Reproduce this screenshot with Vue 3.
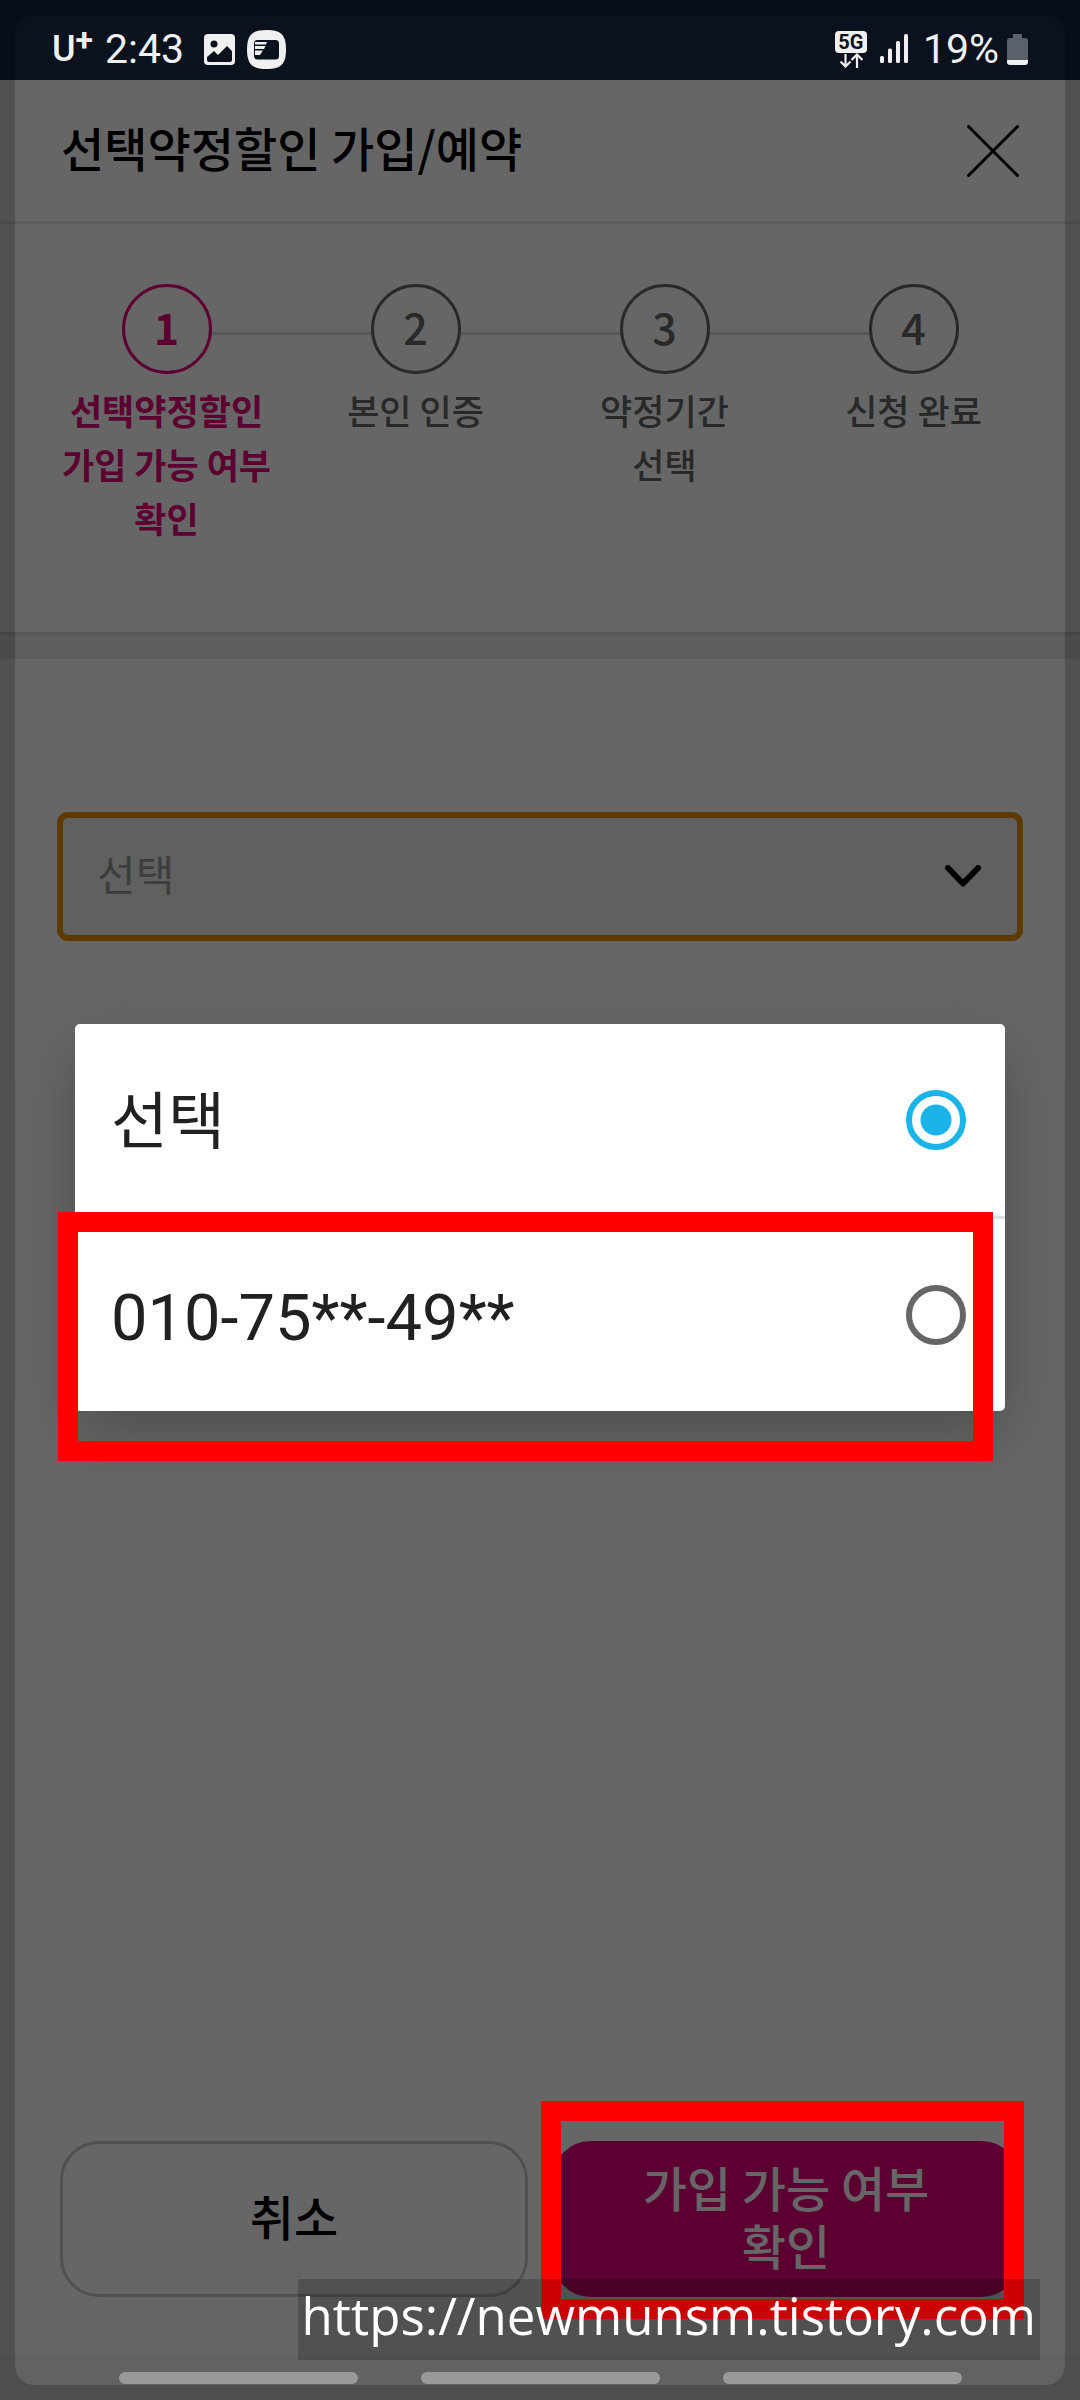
<template>
  <div class="screen">
    <div class="status-bar">
      <div class="status-group">
        <span class="carrier">U<span class="plus">+</span></span>
        <span class="clock">2:43</span>
        <svg class="photo-icon" width="31" height="31" viewBox="0 0 31 31">
          <rect width="31" height="31" rx="4" fill="#f0f0f0" />
          <circle cx="10" cy="10" r="3.5" fill="#0b121d" />
          <path d="M3 23l7-6 4 4 9-9 5 5v9q0 2-2 2H5q-2 0-2-2z" fill="#0b121d" />
        </svg>
        <svg class="app-icon" width="39" height="39" viewBox="0 0 39 39">
          <path d="M19.500 0C34 0 39 5 39 19.500S34 39 19.500 39 0 34 0 19.500 5 0 19.500 0z" fill="#f0f0f0" />
          <rect x="8" y="11" width="23" height="17.500" rx="2.500" fill="#0b121d" stroke="#0b121d" stroke-width="2" />
          <path d="M8 12h12l-1 2.500H8zM8 16h10.500l-1.500 3H8zM8 20.500h8l-3 4.500H8z" fill="#f0f0f0" />
        </svg>
      </div>
      <div class="status-group">
        <div class="network">
          <span class="network-type">5G</span>
          <svg width="24" height="15" viewBox="0 0 24 15" fill="none" stroke="#f0f0f0" stroke-width="2.200">
            <path d="M6.500 1v12M1.500 8.500l5 5 5-5M18 15V2M12.500 7L18 1.500 23.500 7" />
          </svg>
        </div>
        <svg class="signal" width="28" height="30" viewBox="0 0 28 30" fill="#f0f0f0">
          <rect x="0" y="22" width="4" height="7" rx="1.500" />
          <rect x="8" y="14.500" width="4" height="14.500" rx="1.500" />
          <rect x="16" y="7" width="4" height="22" rx="1.500" />
          <rect x="24" y="0" width="4" height="29" rx="1.500" />
        </svg>
        <span class="clock">19%</span>
        <svg class="battery" width="21" height="31" viewBox="0 0 21 31">
          <path d="M6 0h9v4h3q3 0 3 3v19H0V7q0-3 3-3h3z" fill="#5a616b" />
          <path d="M0 26h21v2q0 3-3 3H3q-3 0-3-3z" fill="#f0f0f0" />
        </svg>
      </div>
    </div>

    <main class="page">
      <header class="page-header">
        <h1>선택약정할인 가입/예약</h1>
        <button class="close" type="button" aria-label="닫기">
          <svg width="52" height="52" viewBox="0 0 52 52" fill="none" stroke="#000" stroke-width="3" stroke-linecap="round">
            <path d="M1.500 1.500l49 49M50.500 1.500l-49 49" />
          </svg>
        </button>
      </header>

      <ol class="steps">
        <li v-for="(step, i) in steps" :key="i" class="step" :class="{ active: i === 0 }">
          <div class="step-head">
            <span class="circle">{{ i + 1 }}</span>
          </div>
          <div class="step-label">
            <div v-for="line in step" :key="line">{{ line }}</div>
          </div>
        </li>
      </ol>

      <div class="select-box">
        <select v-model="selected" aria-label="휴대폰 번호">
          <option v-for="opt in options" :key="opt" :value="opt">{{ opt }}</option>
        </select>
        <svg class="chevron" width="36" height="22" viewBox="0 0 36 22" fill="none" stroke="#000" stroke-width="6" stroke-linecap="round" stroke-linejoin="round">
          <path d="M3 3l15 15.500L33 3" />
        </svg>
      </div>

      <footer class="actions">
        <div class="action">
          <button class="btn cancel" type="button">취소</button>
        </div>
        <div class="action">
          <button class="btn confirm" type="button">가입 가능 여부<br />확인</button>
          <div class="marker marker-button"></div>
        </div>
      </footer>
    </main>

    <div class="scrim"></div>

    <div class="dialog-wrap">
      <div class="dialog" role="dialog">
        <label v-for="opt in options" :key="opt" class="option">
          <span>{{ opt }}</span>
          <input v-model="selected" type="radio" name="phone" :value="opt" />
        </label>
        <div class="marker marker-option"></div>
      </div>
    </div>

    <nav class="nav-bar">
      <span v-for="n in 3" :key="n" class="nav-hint"></span>
    </nav>

    <div class="watermark">https://newmunsm.tistory.com</div>
    <div class="bezel"></div>
  </div>
</template>

<script setup>
import { ref } from 'vue'

const steps = [
  ['선택약정할인', '가입 가능 여부', '확인'],
  ['본인 인증'],
  ['약정기간', '선택'],
  ['신청 완료']
]

const options = ['선택', '010-75**-49**']
const selected = ref('선택')
</script>

<style>
body {
  margin: 0;
}
</style>

<style scoped>
.screen {
  position: relative;
  display: flex;
  flex-direction: column;
  min-height: 100vh;
  overflow: hidden;
  background: #fff;
  font-family: "Noto Sans CJK KR", sans-serif;
}

/* status bar */
.status-bar {
  display: flex;
  align-items: center;
  justify-content: space-between;
  height: 80px;
  padding: 18px 52px 0;
  box-sizing: border-box;
  background: #0b121d;
  color: #f0f0f0;
  font-family: Roboto, sans-serif;
}
.status-group {
  display: flex;
  align-items: center;
}
.carrier {
  display: flex;
  align-items: center;
  font-size: 36px;
  font-weight: 500;
  line-height: 40px;
}
.plus {
  padding-bottom: 18px;
  font-size: 32px;
  font-weight: 700;
  line-height: 20px;
}
.clock {
  margin-left: 12px;
  font-size: 41px;
  line-height: 48px;
}
.photo-icon {
  margin-left: 20px;
}
.app-icon {
  margin-left: 12px;
}
.network {
  display: flex;
  flex-direction: column;
  align-items: center;
  width: 32px;
}
.network-type {
  width: 32px;
  border-radius: 4px;
  background: #f0f0f0;
  color: #0b121d;
  font-size: 20px;
  font-weight: 700;
  line-height: 22px;
  text-align: center;
}
.signal {
  margin: 0 3px 0 13px;
}
.battery {
  margin-left: 8px;
}

/* page */
.page {
  display: flex;
  flex: 1;
  flex-direction: column;
}
.page-header {
  display: flex;
  align-items: center;
  justify-content: space-between;
  height: 141px;
  padding: 0 61px;
  border-bottom: 3px solid #ebebeb;
}
h1 {
  margin: 0;
  padding-bottom: 8px;
  font-size: 47px;
  font-weight: 500;
  line-height: 60px;
}
.close {
  display: flex;
  padding: 0;
  border: 0;
  background: none;
}
.steps {
  display: flex;
  margin: 0;
  padding: 60px 42px 87px;
  list-style: none;
}
.step {
  flex: 1;
  color: #666;
  font-weight: 500;
  text-align: center;
}
.step-head {
  display: flex;
  align-items: center;
}
.step-head::before,
.step-head::after {
  content: "";
  flex: 1;
  height: 3px;
  margin-top: 9px;
  background: #dadada;
}
.step:first-child .step-head::before,
.step:last-child .step-head::after {
  background: none;
}
.circle {
  width: 90px;
  height: 90px;
  box-sizing: border-box;
  border: 3px solid #666;
  border-radius: 50%;
  font-size: 43px;
  line-height: 78px;
}
.step-label {
  margin-top: 9px;
  font-size: 35px;
  line-height: 54px;
  white-space: nowrap;
}
.step.active {
  color: #e6007e;
  font-weight: 700;
}
.step.active .circle {
  border-color: #e6007e;
}
.select-box {
  position: relative;
  padding: 177px 57px 0;
  border-top: 3px solid #dadada;
  background: linear-gradient(#ebebeb 24px, transparent 24px);
}
select {
  display: block;
  width: 100%;
  height: 129px;
  padding: 0 34px 8px;
  border: 6px solid #e69100;
  border-radius: 11px;
  appearance: none;
  background: #f0f0f0;
  color: #999;
  font-family: inherit;
  font-size: 42px;
  outline: none;
}
.chevron {
  position: absolute;
  right: 99px;
  bottom: 54px;
  pointer-events: none;
}
.actions {
  display: flex;
  gap: 24px;
  margin-top: auto;
  padding: 0 60px 58px;
}
.action {
  position: relative;
  flex: 1;
}
.btn {
  width: 100%;
  height: 156px;
  padding: 0 0 8px;
  border: 3px solid #c8c8c8;
  border-radius: 39px;
  background: #fff;
  color: #000;
  font-family: inherit;
  font-size: 48px;
  font-weight: 500;
  line-height: 58px;
}
.confirm {
  border-color: #e6007e;
  background: #e6007e;
  color: #fff;
}

/* overlays */
.scrim {
  position: absolute;
  inset: 80px 0 0;
  background: rgba(0, 0, 0, 0.6);
}
.dialog-wrap {
  position: absolute;
  inset: 80px 0 45px;
  display: flex;
  align-items: center;
  padding: 0 75px;
}
.dialog {
  position: relative;
  flex: 1;
  border-radius: 5px;
  background: #fff;
  box-shadow: 0 24px 60px rgba(0, 0, 0, 0.22);
}
.option {
  display: flex;
  align-items: center;
  justify-content: space-between;
  height: 192px;
  padding: 0 39px 0 36px;
  color: #212121;
  font-family: Roboto, "Noto Sans CJK KR", sans-serif;
  font-size: 65px;
}
.option span {
  padding-top: 6px;
}
.option:first-child {
  border-bottom: 3px solid #e0e0e0;
  font-size: 62px;
}
.option:first-child span {
  padding: 0 0 6px;
}
.option input {
  width: 60px;
  height: 60px;
  margin: 0;
  border: 6px solid #666;
  border-radius: 50%;
  appearance: none;
}
.option input:checked {
  border-color: #1ab4e8;
  background: radial-gradient(circle, #1ab4e8 15px, transparent 16px);
}
.marker {
  position: absolute;
  z-index: 1;
  border: 20px solid #f00;
  pointer-events: none;
}
.marker-option {
  inset: 188px 12px -50px -17px;
}
.marker-button {
  inset: -40px -4px -22px -11px;
}
.nav-bar {
  position: relative;
  display: flex;
  justify-content: center;
  gap: 63px;
  padding: 17px 0 16px;
  background: rgba(0, 0, 0, 0.04);
}
.nav-hint {
  width: 239px;
  height: 12px;
  border-radius: 6px;
  background: #999;
}
.watermark {
  position: absolute;
  z-index: 2;
  right: 40px;
  bottom: 40px;
  padding: 0 4px 8px;
  background: rgba(0, 0, 0, 0.2);
  color: #fff;
  font-family: "Open Sans", sans-serif;
  font-size: 51px;
  line-height: 73px;
}
.bezel {
  position: absolute;
  z-index: 3;
  inset: 15px;
  border-radius: 20px;
  box-shadow: 0 0 0 60px rgba(0, 0, 0, 0.2);
  pointer-events: none;
}
</style>
